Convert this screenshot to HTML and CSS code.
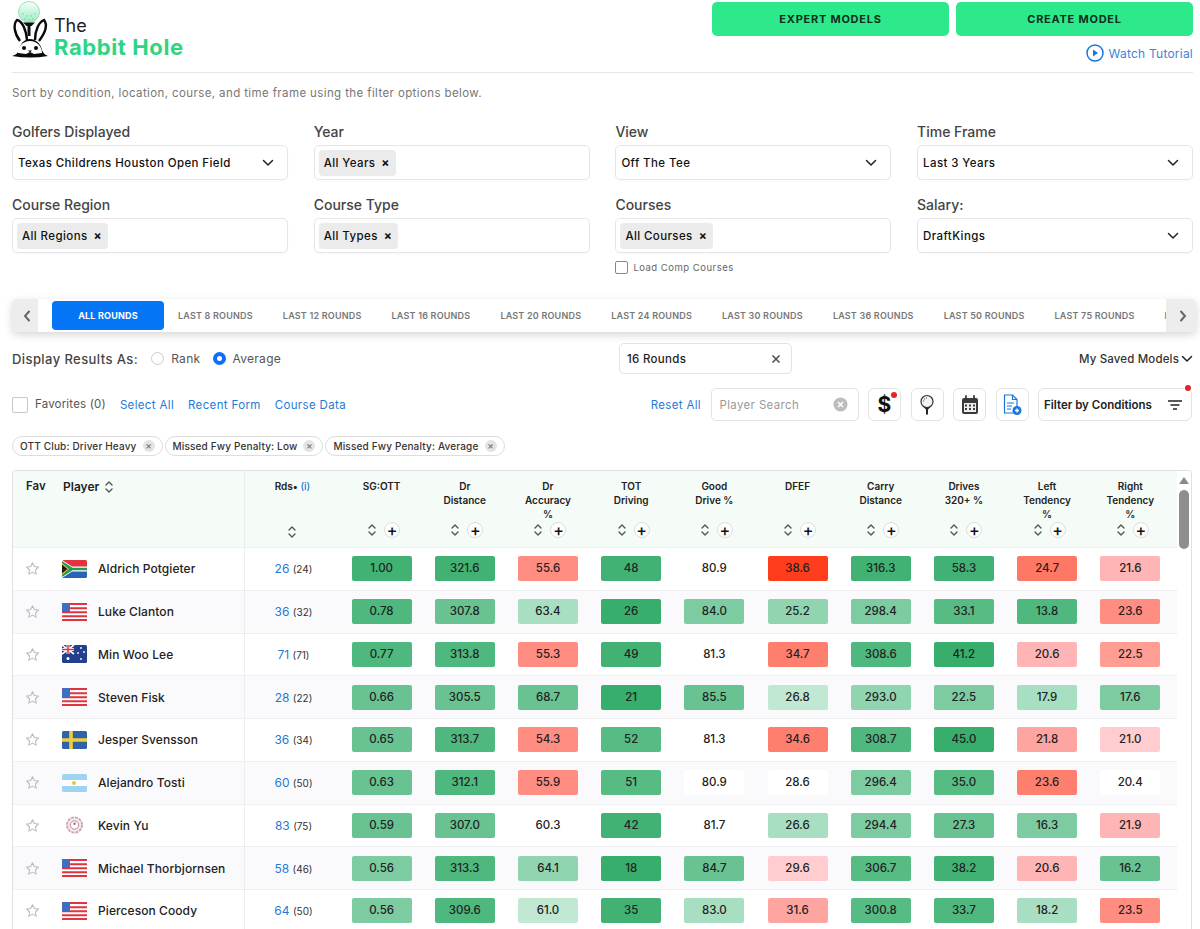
FILE: index.html
```html
<!DOCTYPE html>
<html lang="en">
<head>
<meta charset="utf-8">
<title>The Rabbit Hole</title>
<link rel="stylesheet" href="styles.css">
</head>
<body>
<svg class="defs" width="0" height="0" aria-hidden="true">
  <defs>
    <linearGradient id="ballfill" x1="0" y1="0" x2="0" y2="1"><stop offset="0" stop-color="#f6fffa"/><stop offset="1" stop-color="#9eeac5"/></linearGradient>
  </defs>
  <symbol id="star" viewBox="0 0 24 24"><path d="M12 2.8l2.9 6.1 6.6.9-4.8 4.6 1.2 6.6L12 17.8l-5.9 3.2 1.2-6.6L2.5 9.800l6.600-.9z" fill="none" stroke="#bdbdbd" stroke-width="1.800" stroke-linejoin="round"/></symbol>
  <symbol id="sort" viewBox="0 0 10 14"><path d="M2 5l3-3 3 3M2 9l3 3 3-3" fill="none" stroke="#555" stroke-width="1.400" stroke-linecap="round" stroke-linejoin="round"/></symbol>
  <symbol id="chev" viewBox="0 0 12 8"><path d="M1.500 1.500L6 6l4.500-4.500" fill="none" stroke="#222" stroke-width="1.500" stroke-linecap="round" stroke-linejoin="round"/></symbol>
  <symbol id="us" viewBox="0 0 25 18">
    <rect width="25" height="18" rx="1.500" fill="#fff"/>
    <path d="M0 1h25M0 5.200h25M0 9.200h25M0 13.200h25M0 17h25" stroke="#e0343f" stroke-width="1.900"/>
    <path d="M0 1.500a1.500 1.500 0 0 1 1.500-1.500H8v9H0z" fill="#3b6fc4"/>
  </symbol>
  <symbol id="za" viewBox="0 0 25 18">
    <rect width="25" height="9" rx="1.500" fill="#e0343f"/><rect y="9" width="25" height="9" rx="1.500" fill="#2a62b8"/>
    <path d="M0 0l10 6.500h15v5H10L0 18z" fill="#fff"/>
    <path d="M0 1l10.500 6.800H25v2.400H10.500L0 17z" fill="#1f9a58"/>
    <path d="M0 3l7 6-7 6z" fill="#f6c22d"/><path d="M0 4.500l5.500 4.500L0 13.500z" fill="#1c1c1c"/>
  </symbol>
  <symbol id="au" viewBox="0 0 25 18">
    <rect width="25" height="18" rx="1.500" fill="#23408f"/>
    <path d="M0 0l12 9M12 0L0 9" stroke="#fff" stroke-width="1.600"/><path d="M6 0v9M0 4.500h12" stroke="#fff" stroke-width="3"/><path d="M6 0v9M0 4.500h12" stroke="#e0343f" stroke-width="1.500"/>
    <g fill="#fff"><circle cx="6" cy="13.500" r="1.500"/><circle cx="19" cy="3" r=".9"/><circle cx="16" cy="8" r=".9"/><circle cx="22" cy="7" r=".9"/><circle cx="19" cy="14" r=".9"/></g>
  </symbol>
  <symbol id="se" viewBox="0 0 25 18"><rect width="25" height="18" rx="1.500" fill="#2f62a8"/><path d="M9 0v18M0 9h25" stroke="#f0cd3a" stroke-width="3.600"/></symbol>
  <symbol id="ar" viewBox="0 0 25 18"><rect width="25" height="18" rx="1.500" fill="#9dd4f2"/><rect y="6" width="25" height="6" fill="#fff"/><circle cx="12" cy="9" r="2" fill="#f2c23c"/></symbol>
  <symbol id="tw" viewBox="0 0 25 18"><circle cx="12.500" cy="9" r="7.600" fill="#f6e9ec" stroke="#c9a6b0" stroke-width="1.800" stroke-dasharray="3 1"/><circle cx="12.500" cy="9" r="4.200" fill="#fff" stroke="#b98a98" stroke-width="1"/><circle cx="12.500" cy="7.800" r="1.200" fill="#8d7a90"/></symbol>
</svg>

<header class="top">
  <div class="brand">
    <svg class="logo" width="48" height="60" viewBox="0 0 48 60" aria-hidden="true">
      <circle cx="17" cy="12" r="10.500" fill="url(#ballfill)" stroke="#7fdcb0" stroke-width=".8"/>
      <g fill="#5fd39c"><circle cx="11" cy="14" r=".7"/><circle cx="15" cy="16" r=".7"/><circle cx="19" cy="16" r=".7"/><circle cx="23" cy="14" r=".7"/><circle cx="13" cy="19" r=".7"/><circle cx="17" cy="20" r=".7"/><circle cx="21" cy="19" r=".7"/></g>
      <path d="M11 22.500h12l-3.500 3.500h-1v10h-3V26h-1z" fill="#111"/>
      <path d="M8 41C2 33 1 24 5 20c5 1 9 9 10 20" fill="#fff" stroke="#0a0a0a" stroke-width="2.400"/>
      <path d="M27 41c6-8 9-16 5-21-5 2-9 10-9 20" fill="#fff" stroke="#0a0a0a" stroke-width="2.400"/>
      <path d="M0 56c4-1 6-3 7-6 1-6 5-11 11-11s11 5 12 11c1 3 3 5 6 6-12 2-24 2-36 0z" fill="#0a0a0a"/>
      <path d="M6 53c0-7 5-12 12-12s12 5 12 12l-8 1-4-2-4 2z" fill="#fff"/>
      <circle cx="12" cy="48" r="2" fill="#0a0a0a"/><circle cx="24" cy="48" r="2" fill="#0a0a0a"/><path d="M16 50.500h4l-2 2z" fill="#0a0a0a"/>
    </svg>
    <div class="wordmark"><span class="word-the">The</span><span class="word-hole">Rabbit Hole</span></div>
  </div>
  <div class="actions">
    <div class="action-btns"><button class="cta">EXPERT MODELS</button><button class="cta">CREATE MODEL</button></div>
    <a class="tutorial">
      <svg width="18" height="18" viewBox="0 0 18 18" aria-hidden="true"><circle cx="9" cy="9" r="8" fill="none" stroke="#1976e0" stroke-width="1.500"/><path d="M7 5.500l5 3.500-5 3.500z" fill="#1976e0"/></svg>
      Watch Tutorial
    </a>
  </div>
</header>

<p class="intro">Sort by condition, location, course, and time frame using the filter options below.</p>

<section class="filters">
  <div class="field"><label>Golfers Displayed</label><div class="select"><span>Texas Childrens Houston Open Field</span><svg class="chev"><use href="#chev"/></svg></div></div>
  <div class="field"><label>Year</label><div class="select multi"><span class="tag">All Years <b>×</b></span></div></div>
  <div class="field"><label>View</label><div class="select"><span>Off The Tee</span><svg class="chev"><use href="#chev"/></svg></div></div>
  <div class="field"><label>Time Frame</label><div class="select"><span>Last 3 Years</span><svg class="chev"><use href="#chev"/></svg></div></div>
  <div class="field"><label>Course Region</label><div class="select multi"><span class="tag">All Regions <b>×</b></span></div></div>
  <div class="field"><label>Course Type</label><div class="select multi"><span class="tag">All Types <b>×</b></span></div></div>
  <div class="field"><label>Courses</label><div class="select multi"><span class="tag">All Courses <b>×</b></span></div>
    <div class="comp"><span class="box small"></span>Load Comp Courses</div></div>
  <div class="field"><label>Salary:</label><div class="select"><span>DraftKings</span><svg class="chev"><use href="#chev"/></svg></div></div>
</section>

<nav class="tabs">
  <button class="tab-arrow"><svg width="8" height="12" viewBox="0 0 8 12"><path d="M6 1.500L2 6l4 4.500" fill="none" stroke="#666" stroke-width="2" stroke-linecap="round"/></svg></button>
  <div class="tab-list">
    <span class="tab active">ALL ROUNDS</span>
    <span class="tab">LAST 8 ROUNDS</span><span class="tab">LAST 12 ROUNDS</span><span class="tab">LAST 16 ROUNDS</span><span class="tab">LAST 20 ROUNDS</span><span class="tab">LAST 24 ROUNDS</span><span class="tab">LAST 30 ROUNDS</span><span class="tab">LAST 36 ROUNDS</span><span class="tab">LAST 50 ROUNDS</span><span class="tab">LAST 75 ROUNDS</span><span class="tab">LAST 100 ROUNDS</span>
  </div>
  <button class="tab-arrow"><svg width="8" height="12" viewBox="0 0 8 12"><path d="M2 1.500L6 6l-4 4.500" fill="none" stroke="#666" stroke-width="2" stroke-linecap="round"/></svg></button>
</nav>

<section class="display">
  <div class="display-left">
    <strong>Display Results As:</strong>
    <span class="radio"></span><span class="opt">Rank</span>
    <span class="radio on"></span><span class="opt">Average</span>
  </div>
  <div class="rounds-box"><span>16 Rounds</span><svg width="10" height="10" viewBox="0 0 10 10"><path d="M1.500 1.500l7 7M8.500 1.500l-7 7" stroke="#555" stroke-width="1.700"/></svg></div>
  <div class="saved">My Saved Models <svg class="chev"><use href="#chev"/></svg></div>
</section>

<section class="toolbar">
  <div class="tool-left">
    <span class="box"></span><span class="fav">Favorites (0)</span>
    <a class="lnk">Select All</a><a class="lnk">Recent Form</a><a class="lnk">Course Data</a>
  </div>
  <div class="tool-right">
    <a class="lnk">Reset All</a>
    <div class="search"><span>Player Search</span><svg width="15" height="15" viewBox="0 0 15 15"><circle cx="7.500" cy="7.500" r="7" fill="#bdbdbd"/><path d="M5 5l5 5M10 5l-5 5" stroke="#fff" stroke-width="1.500"/></svg></div>
    <div class="ico dotted"><span class="dollar">$</span></div>
    <div class="ico"><svg width="16" height="22" viewBox="0 0 16 22"><circle cx="8" cy="7.500" r="6" fill="#f4f4f4" stroke="#333" stroke-width="1.200"/><path d="M4 12.500c2 1.500 6 1.500 8 0L9 15.500v5H7v-5z" fill="#222"/><circle cx="5.500" cy="5" r=".7" fill="#777"/><circle cx="7.500" cy="4" r=".7" fill="#777"/><circle cx="4.500" cy="7" r=".7" fill="#777"/></svg></div>
    <div class="ico"><svg width="18" height="20" viewBox="0 0 18 20"><rect x="1" y="3" width="16" height="16" rx="2" fill="#3a3a3a"/><path d="M5 1v4M13 1v4" stroke="#3a3a3a" stroke-width="1.800" stroke-linecap="round"/><rect x="3" y="8" width="12" height="9" fill="#eee"/><g fill="#3a3a3a"><rect x="4" y="9.500" width="2" height="2"/><rect x="8" y="9.500" width="2" height="2"/><rect x="12" y="9.500" width="2" height="2"/><rect x="4" y="13" width="2" height="2"/><rect x="8" y="13" width="2" height="2"/><rect x="12" y="13" width="2" height="2"/></g></svg></div>
    <div class="ico"><svg width="20" height="22" viewBox="0 0 20 22"><path d="M2.500 1h8l4.500 4.500V19H2.500z" fill="#fff" stroke="#1976e0" stroke-width="1.200"/><path d="M10.500 1v4.500H15M5 9h7M5 12h5M5 15h4" fill="none" stroke="#1976e0" stroke-width="1.100"/><circle cx="15" cy="16.500" r="4.500" fill="#1976e0"/><path d="M15 14.500v4M13 16.500h4" stroke="#fff" stroke-width="1.300"/></svg></div>
    <div class="cond dotted"><span>Filter by Conditions</span><svg width="14" height="10" viewBox="0 0 14 10"><path d="M0 1h14M2.500 5h9M5 9h4" stroke="#222" stroke-width="1.500"/></svg></div>
  </div>
</section>

<section class="chips">
  <span class="chip">OTT Club: Driver Heavy <i>×</i></span>
  <span class="chip">Missed Fwy Penalty: Low <i>×</i></span>
  <span class="chip">Missed Fwy Penalty: Average <i>×</i></span>
</section>

<section class="table">
  <div class="thead row">
    <div class="th-fav">Fav</div>
    <div class="th-player">Player <svg class="sort"><use href="#sort"/></svg></div>
    <div class="th th-rds"><span>Rds<em>•</em> <a>(i)</a></span><div class="th-ctl"><svg class="sort"><use href="#sort"/></svg></div></div>
    <div class="th"><span>SG:OTT</span><div class="th-ctl"><svg class="sort"><use href="#sort"/></svg><i class="plus">+</i></div></div>
    <div class="th"><span>Dr<br>Distance</span><div class="th-ctl"><svg class="sort"><use href="#sort"/></svg><i class="plus">+</i></div></div>
    <div class="th"><span>Dr<br>Accuracy<br>%</span><div class="th-ctl"><svg class="sort"><use href="#sort"/></svg><i class="plus">+</i></div></div>
    <div class="th"><span>TOT<br>Driving</span><div class="th-ctl"><svg class="sort"><use href="#sort"/></svg><i class="plus">+</i></div></div>
    <div class="th"><span>Good<br>Drive %</span><div class="th-ctl"><svg class="sort"><use href="#sort"/></svg><i class="plus">+</i></div></div>
    <div class="th"><span>DFEF</span><div class="th-ctl"><svg class="sort"><use href="#sort"/></svg><i class="plus">+</i></div></div>
    <div class="th"><span>Carry<br>Distance</span><div class="th-ctl"><svg class="sort"><use href="#sort"/></svg><i class="plus">+</i></div></div>
    <div class="th"><span>Drives<br>320+ %</span><div class="th-ctl"><svg class="sort"><use href="#sort"/></svg><i class="plus">+</i></div></div>
    <div class="th"><span>Left<br>Tendency<br>%</span><div class="th-ctl"><svg class="sort"><use href="#sort"/></svg><i class="plus">+</i></div></div>
    <div class="th"><span>Right<br>Tendency<br>%</span><div class="th-ctl"><svg class="sort"><use href="#sort"/></svg><i class="plus">+</i></div></div>
  </div>

  <div class="row tr">
    <div class="c-star"><svg class="star"><use href="#star"/></svg></div>
    <div class="c-player"><svg class="flag"><use href="#za"/></svg>Aldrich Potgieter</div>
    <div class="c-rds"><a>26</a> <small>(24)</small></div>
    <div class="c"><span class="v g8">1.00</span></div><div class="c"><span class="v g8">321.6</span></div><div class="c"><span class="v p5">55.6</span></div><div class="c"><span class="v g8">48</span></div><div class="c"><span class="v">80.9</span></div><div class="c"><span class="v pmax">38.6</span></div><div class="c"><span class="v g8">316.3</span></div><div class="c"><span class="v g8">58.3</span></div><div class="c"><span class="v p7">24.7</span></div><div class="c"><span class="v p2">21.6</span></div>
  </div>
  <div class="row tr">
    <div class="c-star"><svg class="star"><use href="#star"/></svg></div>
    <div class="c-player"><svg class="flag"><use href="#us"/></svg>Luke Clanton</div>
    <div class="c-rds"><a>36</a> <small>(32)</small></div>
    <div class="c"><span class="v g7">0.78</span></div><div class="c"><span class="v g5">307.8</span></div><div class="c"><span class="v g2">63.4</span></div><div class="c"><span class="v g9">26</span></div><div class="c"><span class="v g4">84.0</span></div><div class="c"><span class="v g3">25.2</span></div><div class="c"><span class="v g4">298.4</span></div><div class="c"><span class="v g6">33.1</span></div><div class="c"><span class="v g7">13.8</span></div><div class="c"><span class="v p5">23.6</span></div>
  </div>
  <div class="row tr">
    <div class="c-star"><svg class="star"><use href="#star"/></svg></div>
    <div class="c-player"><svg class="flag"><use href="#au"/></svg>Min Woo Lee</div>
    <div class="c-rds"><a>71</a> <small>(71)</small></div>
    <div class="c"><span class="v g7">0.77</span></div><div class="c"><span class="v g7">313.8</span></div><div class="c"><span class="v p5">55.3</span></div><div class="c"><span class="v g8">49</span></div><div class="c"><span class="v">81.3</span></div><div class="c"><span class="v p6">34.7</span></div><div class="c"><span class="v g7">308.6</span></div><div class="c"><span class="v g9">41.2</span></div><div class="c"><span class="v p2">20.6</span></div><div class="c"><span class="v p4">22.5</span></div>
  </div>
  <div class="row tr">
    <div class="c-star"><svg class="star"><use href="#star"/></svg></div>
    <div class="c-player"><svg class="flag"><use href="#us"/></svg>Steven Fisk</div>
    <div class="c-rds"><a>28</a> <small>(22)</small></div>
    <div class="c"><span class="v g5">0.66</span></div><div class="c"><span class="v g5">305.5</span></div><div class="c"><span class="v g5">68.7</span></div><div class="c"><span class="v g9">21</span></div><div class="c"><span class="v g5">85.5</span></div><div class="c"><span class="v g1">26.8</span></div><div class="c"><span class="v g3">293.0</span></div><div class="c"><span class="v g4">22.5</span></div><div class="c"><span class="v g2">17.9</span></div><div class="c"><span class="v g4">17.6</span></div>
  </div>
  <div class="row tr">
    <div class="c-star"><svg class="star"><use href="#star"/></svg></div>
    <div class="c-player"><svg class="flag"><use href="#se"/></svg>Jesper Svensson</div>
    <div class="c-rds"><a>36</a> <small>(34)</small></div>
    <div class="c"><span class="v g5">0.65</span></div><div class="c"><span class="v g7">313.7</span></div><div class="c"><span class="v p5">54.3</span></div><div class="c"><span class="v g6">52</span></div><div class="c"><span class="v">81.3</span></div><div class="c"><span class="v p6">34.6</span></div><div class="c"><span class="v g7">308.7</span></div><div class="c"><span class="v g9">45.0</span></div><div class="c"><span class="v p3">21.8</span></div><div class="c"><span class="v p1">21.0</span></div>
  </div>
  <div class="row tr">
    <div class="c-star"><svg class="star"><use href="#star"/></svg></div>
    <div class="c-player"><svg class="flag"><use href="#ar"/></svg>Alejandro Tosti</div>
    <div class="c-rds"><a>60</a> <small>(50)</small></div>
    <div class="c"><span class="v g5">0.63</span></div><div class="c"><span class="v g7">312.1</span></div><div class="c"><span class="v p5">55.9</span></div><div class="c"><span class="v g6">51</span></div><div class="c"><span class="v w">80.9</span></div><div class="c"><span class="v w">28.6</span></div><div class="c"><span class="v g4">296.4</span></div><div class="c"><span class="v g6">35.0</span></div><div class="c"><span class="v p6">23.6</span></div><div class="c"><span class="v w">20.4</span></div>
  </div>
  <div class="row tr">
    <div class="c-star"><svg class="star"><use href="#star"/></svg></div>
    <div class="c-player"><svg class="flag"><use href="#tw"/></svg>Kevin Yu</div>
    <div class="c-rds"><a>83</a> <small>(75)</small></div>
    <div class="c"><span class="v g5">0.59</span></div><div class="c"><span class="v g5">307.0</span></div><div class="c"><span class="v">60.3</span></div><div class="c"><span class="v g8">42</span></div><div class="c"><span class="v">81.7</span></div><div class="c"><span class="v g2">26.6</span></div><div class="c"><span class="v g4">294.4</span></div><div class="c"><span class="v g5">27.3</span></div><div class="c"><span class="v g4">16.3</span></div><div class="c"><span class="v p2">21.9</span></div>
  </div>
  <div class="row tr">
    <div class="c-star"><svg class="star"><use href="#star"/></svg></div>
    <div class="c-player"><svg class="flag"><use href="#us"/></svg>Michael Thorbjornsen</div>
    <div class="c-rds"><a>58</a> <small>(46)</small></div>
    <div class="c"><span class="v g4">0.56</span></div><div class="c"><span class="v g7">313.3</span></div><div class="c"><span class="v g3">64.1</span></div><div class="c"><span class="v g9">18</span></div><div class="c"><span class="v g5">84.7</span></div><div class="c"><span class="v p1">29.6</span></div><div class="c"><span class="v g6">306.7</span></div><div class="c"><span class="v g8">38.2</span></div><div class="c"><span class="v p2">20.6</span></div><div class="c"><span class="v g5">16.2</span></div>
  </div>
  <div class="row tr">
    <div class="c-star"><svg class="star"><use href="#star"/></svg></div>
    <div class="c-player"><svg class="flag"><use href="#us"/></svg>Pierceson Coody</div>
    <div class="c-rds"><a>64</a> <small>(50)</small></div>
    <div class="c"><span class="v g4">0.56</span></div><div class="c"><span class="v g7">309.6</span></div><div class="c"><span class="v g1">61.0</span></div><div class="c"><span class="v g8">35</span></div><div class="c"><span class="v g2">83.0</span></div><div class="c"><span class="v p3">31.6</span></div><div class="c"><span class="v g6">300.8</span></div><div class="c"><span class="v g7">33.7</span></div><div class="c"><span class="v g2">18.2</span></div><div class="c"><span class="v p5">23.5</span></div>
  </div>

  <div class="scrollbar"><i class="sb-up"></i><i class="sb-thumb"></i></div>
</section>
</body>
</html>
```

FILE: styles.css
```css
* { box-sizing: border-box; }
html, body { margin: 0; height: 929px; overflow: hidden; }
body {
  padding: 0 7px 0 12px;
  background: #fff;
  color: #222;
  font-family: Inter, "Open Sans", "Liberation Sans", sans-serif;
  font-size: 12px;
}
.defs { position: absolute; }
a { color: #1f7ad6; }
button { font: inherit; border: 0; cursor: pointer; }

/* header */
.top { display: flex; justify-content: space-between; height: 73px; border-bottom: 1px solid #e6e6e6; }
.brand { display: flex; align-items: flex-start; }
.logo { display: block; flex: none; }
.wordmark { display: flex; flex-direction: column; margin: 16px 0 0 -6px; }
.word-the { height: 20px; line-height: 20px; font-size: 18px; color: #222; }
.word-hole { height: 22px; line-height: 22px; font-size: 22px; font-weight: 700; color: #2ed583; letter-spacing: .6px; }
.actions { width: 481px; padding-top: 2px; display: flex; flex-direction: column; align-items: flex-end; }
.action-btns { display: flex; gap: 7px; width: 100%; }
.cta { flex: 1; height: 34px; border-radius: 5px; background: #2de98b; color: #0f2f1e; font-size: 11px; font-weight: 700; letter-spacing: .75px; }
.tutorial { display: flex; align-items: center; gap: 5px; margin-top: 8px; color: #3f83d6; font-size: 12px; letter-spacing: .22px; }

.intro { margin: 13px 0 0; height: 14px; line-height: 14px; color: #777; font-size: 11.5px; letter-spacing: .39px; }

/* filters */
.filters { display: grid; grid-template-columns: repeat(4, 276px); column-gap: 25.7px; row-gap: 17px; margin-top: 24px; }
.field { position: relative; }
.field:nth-child(n+5) { height: 56px; }
.field label { display: block; height: 21px; line-height: 16px; font-size: 14px; font-weight: 500; color: #444; }
.select { height: 35px; border: 1px solid #e6e6e6; border-radius: 5px; display: flex; align-items: center; justify-content: space-between; padding: 0 13px 0 5px; font-size: 11.5px; font-weight: 500; letter-spacing: .4px; color: #111; box-shadow: 0 1px 2px rgba(0,0,0,.03); }
.chev { width: 12px; height: 8px; flex: none; }
.select.multi { padding-left: 4px; }
.tag { display: inline-flex; align-items: center; gap: 6px; height: 26px; padding: 0 6px 0 5px; border-radius: 4px; background: #ebebeb; }
.tag b { font-size: 12px; }
.comp { position: absolute; left: 0; top: 64px; display: flex; align-items: center; gap: 5px; font-size: 9.5px; letter-spacing: .5px; color: #666; }
.box { display: inline-block; width: 16px; height: 16px; border: 1px solid #c8c8c8; border-radius: 2px; background: #fff; }
.box.small { width: 13px; height: 13px; border-color: #888; }

/* tabs */
.tabs { display: flex; align-items: center; height: 33px; margin: 46px -3px 0 0; background: #fff; box-shadow: 0 3px 9px rgba(0,0,0,.16); border-radius: 5px; }
.tab-arrow { flex: none; width: 26px; height: 33px; background: #ededed; border-radius: 5px 0 0 5px; display: flex; align-items: center; justify-content: center; padding: 0 0 0 3px; }
.tab-arrow:last-child { width: 30px; border-radius: 0 5px 5px 0; padding: 0 0 0 4px; }
.tab-list { flex: 1; min-width: 0; display: flex; align-items: center; padding-left: 14px; overflow: hidden; white-space: nowrap; }
.tab { flex: none; padding: 0 15px; color: #777; font-size: 9px; font-weight: 600; letter-spacing: .2px; }
.tab.active { width: 112px; height: 29px; padding: 0; line-height: 29px; text-align: center; border-radius: 4px; background: #0476f5; color: #fff; font-weight: 700; margin-right: -1px; }

/* display row */
.display { display: grid; grid-template-columns: 607px 173px 1fr; align-items: center; height: 31px; margin-top: 11px; }
.display-left { display: flex; align-items: center; }
.display-left strong { font-size: 13px; font-weight: 500; letter-spacing: .42px; color: #444; margin-right: 13px; }
.radio { width: 13px; height: 13px; border: 1px solid #ccc; border-radius: 50%; margin-right: 7px; }
.radio.on { border: 4px solid #0d6efd; margin-right: 6px; }
.opt { font-size: 12px; letter-spacing: .3px; color: #555; margin-right: 13px; }
.rounds-box { height: 31px; border: 1px solid #e2e2e2; border-radius: 5px; display: flex; align-items: center; justify-content: space-between; padding: 0 10px 0 7px; font-size: 11.5px; font-weight: 500; letter-spacing: .3px; color: #222; }
.saved { display: flex; align-items: center; justify-content: flex-end; gap: 2px; font-size: 11.5px; font-weight: 500; letter-spacing: .15px; color: #333; }

/* toolbar */
.toolbar { display: flex; justify-content: space-between; align-items: center; height: 33px; margin-top: 14px; }
.tool-left, .tool-right { display: flex; align-items: center; }
.fav { margin-left: 7px; margin-top: -2px; color: #555; font-size: 11.5px; letter-spacing: .18px; }
.lnk { font-size: 11.5px; letter-spacing: .35px; margin-left: 14px; white-space: nowrap; }
.tool-right { gap: 9.5px; padding-right: 1px; }
.search { width: 148px; height: 33px; border: 1px solid #e2e2e2; border-radius: 5px; display: flex; align-items: center; justify-content: space-between; padding: 0 10px 0 8px; color: #999; font-size: 11.5px; letter-spacing: .35px; }
.ico { position: relative; width: 33px; height: 33px; border: 1px solid #e2e2e2; border-radius: 6px; display: flex; align-items: center; justify-content: center; }
.dollar { font-size: 21px; font-weight: 700; color: #111; }
.dotted::after { content: ""; position: absolute; top: 3px; right: 3px; width: 6px; height: 6px; border-radius: 50%; background: #e4242b; }
.cond { position: relative; width: 154px; height: 33px; border: 1px solid #e2e2e2; border-radius: 6px; display: flex; align-items: center; justify-content: space-between; padding: 0 9px 0 5px; font-size: 11.5px; font-weight: 600; color: #222; }
.cond.dotted::after { top: -4px; right: 0; }

/* chips */
.chips { display: flex; gap: 2px; height: 20px; margin-top: 15px; }
.chip { display: inline-flex; align-items: center; justify-content: space-between; gap: 6px; padding: 0 7px; border: 1px solid #ddd; border-radius: 10px; font-size: 10px; font-weight: 500; letter-spacing: .16px; color: #333; white-space: nowrap; }
.chip i { width: 12px; height: 12px; border-radius: 50%; background: #e4e4e4; color: #777; font-style: normal; text-align: center; line-height: 11px; font-size: 10px; letter-spacing: 0; }

/* table */
.table { position: relative; margin-top: 14px; width: 1180px; height: 480px; border: 1px solid #e0e0e0; border-bottom: 0; border-radius: 4px 4px 0 0; overflow: hidden; }
.row { display: grid; grid-template-columns: 41px 191px 95px repeat(10, 83.2px) 1fr; }
.thead { height: 77px; background: #f5fcf8; margin-right: 14px; border-bottom: 1px solid #eef3f0; font-size: 10px; font-weight: 600; color: #222; }
.th-fav { padding: 8px 0 0 13px; font-size: 11.5px; font-weight: 600; }
.th-player { padding: 8px 0 0 9px; font-size: 12px; font-weight: 600; border-right: 1px solid #e8eeea; display: flex; align-items: flex-start; gap: 5px; }
.th-player .sort { margin-top: 1px; }
.sort { width: 10px; height: 14px; flex: none; }
.th { display: flex; flex-direction: column; align-items: center; justify-content: space-between; padding: 8px 0 9px; text-align: center; line-height: 14px; }
.th-rds { padding-bottom: 7px; }
.th-rds .th-ctl { margin-right: 6px; }
.th em { font-style: normal; }
.th a { font-weight: 500; }
.th-ctl { display: flex; align-items: center; gap: 7px; height: 16px; margin-left: 4px; }
.plus { width: 16px; height: 16px; border: 1px solid #ddd; border-radius: 50%; background: #fff; color: #111; font-style: normal; font-size: 16px; font-weight: 500; line-height: 14px; text-align: center; }
.tr { height: 42.75px; margin-right: 14px; border-bottom: 1px solid #efeff2; align-items: center; }
.tr:nth-of-type(odd) { background: #fafafd; }
.c-star { display: flex; padding-left: 12px; }
.star { width: 15px; height: 15px; }
.c-player { height: 100%; display: flex; align-items: center; gap: 11px; padding-left: 8px; border-right: 1px solid #eeeef1; font-size: 12px; font-weight: 500; letter-spacing: .08px; color: #222; }
.flag { width: 25px; height: 18px; flex: none; }
.c-rds { text-align: center; font-size: 12px; padding-left: 2px; }
.c-rds small { font-size: 10px; color: #333; }
.c { display: flex; justify-content: center; }
.v { width: 60px; height: 25px; line-height: 25px; text-align: center; border-radius: 2px; font-size: 11.5px; font-weight: 500; color: #222; }
.g9 { background: #37ae6b; } .g8 { background: #41b274; } .g7 { background: #4eb87e; }
.g6 { background: #57bb84; } .g5 { background: #68c292; } .g4 { background: #7ccba1; }
.g3 { background: #90d4b0; } .g2 { background: #a8dec1; } .g1 { background: #c0e8d3; }
.p1 { background: #ffcdd0; } .p2 { background: #ffb5b5; } .p3 { background: #ffa5a1; }
.p4 { background: #ff9c94; } .p5 { background: #ff8d82; } .p6 { background: #ff7f6f; }
.p7 { background: #ff7865; } .pmax { background: #ff3c1b; }
.w { background: #fff; }

.scrollbar { position: absolute; top: 0; right: 0; width: 14px; height: 100%; background: #fff; display: flex; flex-direction: column; align-items: center; }
.sb-up { margin-top: 6px; width: 0; height: 0; border-left: 5px solid transparent; border-right: 5px solid transparent; border-bottom: 7px solid #8a8a8a; }
.sb-thumb { margin-top: 6px; width: 10px; height: 59px; border-radius: 5px; background: #8e8e8e; }
```
